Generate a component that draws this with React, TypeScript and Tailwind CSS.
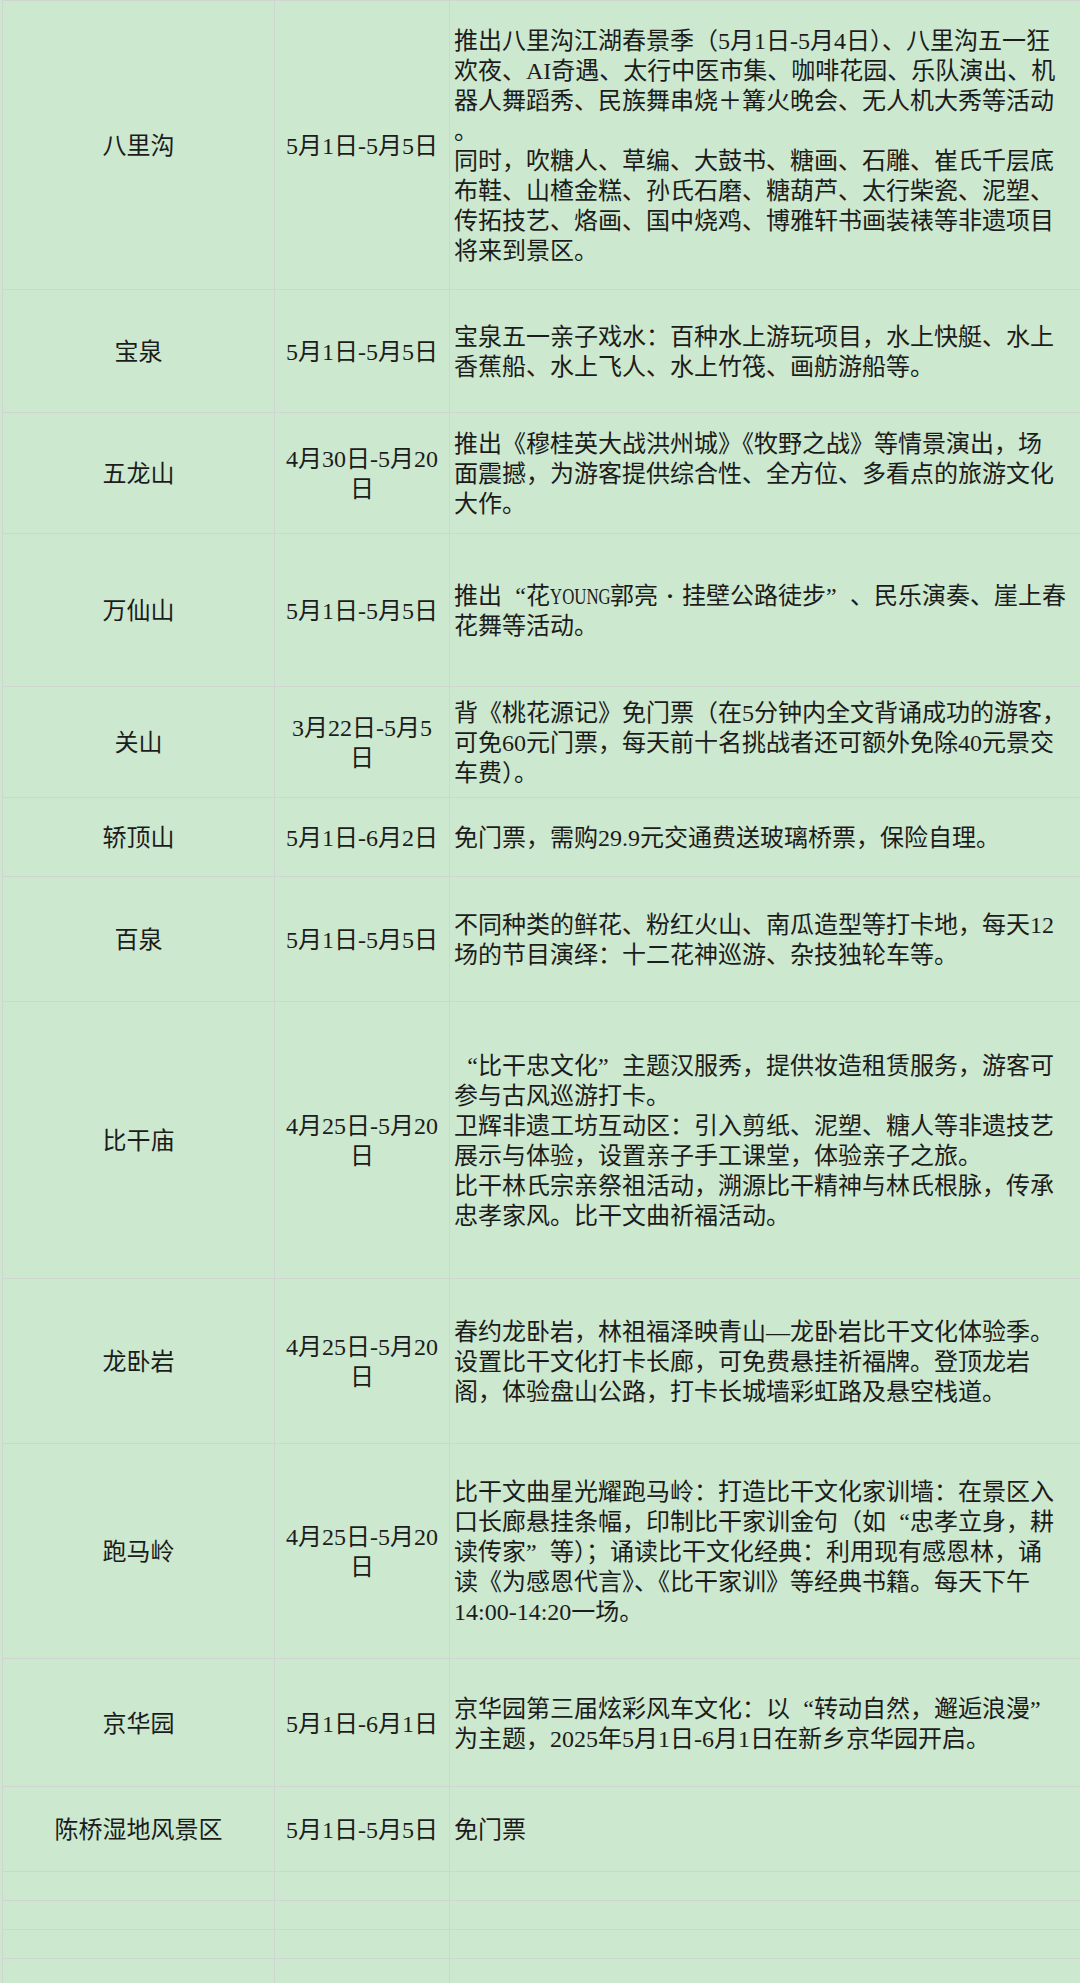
import React from 'react'

type Row = {
  place: string
  date: string[]
  lines: string[]
  h: string
}

const rows: Row[] = [
  {
    place: '八里沟',
    date: ['5月1日-5月5日'],
    h: 'h-[289px]',
    lines: [
      '推出八里沟江湖春景季（5月1日-5月4日）、八里沟五一狂',
      '欢夜、AI奇遇、太行中医市集、咖啡花园、乐队演出、机',
      '器人舞蹈秀、民族舞串烧＋篝火晚会、无人机大秀等活动',
      '。',
      '同时，吹糖人、草编、大鼓书、糖画、石雕、崔氏千层底',
      '布鞋、山楂金糕、孙氏石磨、糖葫芦、太行柴瓷、泥塑、',
      '传拓技艺、烙画、国中烧鸡、博雅轩书画装裱等非遗项目',
      '将来到景区。',
    ],
  },
  {
    place: '宝泉',
    date: ['5月1日-5月5日'],
    h: 'h-[123px]',
    lines: ['宝泉五一亲子戏水：百种水上游玩项目，水上快艇、水上', '香蕉船、水上飞人、水上竹筏、画舫游船等。'],
  },
  {
    place: '五龙山',
    date: ['4月30日-5月20', '日'],
    h: 'h-[121px]',
    lines: [
      '推出《穆桂英大战洪州城》《牧野之战》等情景演出，场',
      '面震撼，为游客提供综合性、全方位、多看点的旅游文化',
      '大作。',
    ],
  },
  {
    place: '万仙山',
    date: ['5月1日-5月5日'],
    h: 'h-[153px]',
    lines: ['推出“花YOUNG郭亮·挂壁公路徒步”、民乐演奏、崖上春', '花舞等活动。'],
  },
  {
    place: '关山',
    date: ['3月22日-5月5', '日'],
    h: 'h-[111px]',
    lines: [
      '背《桃花源记》免门票（在5分钟内全文背诵成功的游客，',
      '可免60元门票，每天前十名挑战者还可额外免除40元景交',
      '车费）。',
    ],
  },
  {
    place: '轿顶山',
    date: ['5月1日-6月2日'],
    h: 'h-[79px]',
    lines: ['免门票，需购29.9元交通费送玻璃桥票，保险自理。'],
  },
  {
    place: '百泉',
    date: ['5月1日-5月5日'],
    h: 'h-[125px]',
    lines: ['不同种类的鲜花、粉红火山、南瓜造型等打卡地，每天12', '场的节目演绎：十二花神巡游、杂技独轮车等。'],
  },
  {
    place: '比干庙',
    date: ['4月25日-5月20', '日'],
    h: 'h-[277px]',
    lines: [
      '“比干忠文化”主题汉服秀，提供妆造租赁服务，游客可',
      '参与古风巡游打卡。',
      '卫辉非遗工坊互动区：引入剪纸、泥塑、糖人等非遗技艺',
      '展示与体验，设置亲子手工课堂，体验亲子之旅。',
      '比干林氏宗亲祭祖活动，溯源比干精神与林氏根脉，传承',
      '忠孝家风。比干文曲祈福活动。',
    ],
  },
  {
    place: '龙卧岩',
    date: ['4月25日-5月20', '日'],
    h: 'h-[165px]',
    lines: [
      '春约龙卧岩，林祖福泽映青山—龙卧岩比干文化体验季。',
      '设置比干文化打卡长廊，可免费悬挂祈福牌。登顶龙岩',
      '阁，体验盘山公路，打卡长城墙彩虹路及悬空栈道。',
    ],
  },
  {
    place: '跑马岭',
    date: ['4月25日-5月20', '日'],
    h: 'h-[215px]',
    lines: [
      '比干文曲星光耀跑马岭：打造比干文化家训墙：在景区入',
      '口长廊悬挂条幅，印制比干家训金句（如“忠孝立身，耕',
      '读传家”等）；诵读比干文化经典：利用现有感恩林，诵',
      '读《为感恩代言》、《比干家训》等经典书籍。每天下午',
      '14:00-14:20一场。',
    ],
  },
  {
    place: '京华园',
    date: ['5月1日-6月1日'],
    h: 'h-[128px]',
    lines: ['京华园第三届炫彩风车文化：以“转动自然，邂逅浪漫”', '为主题，2025年5月1日-6月1日在新乡京华园开启。'],
  },
  {
    place: '陈桥湿地风景区',
    date: ['5月1日-5月5日'],
    h: 'h-[85px]',
    lines: ['免门票'],
  },
]

const emptyRows = ['h-[29px]', 'h-[29px]', 'h-[29px]', 'h-[30px]']

const line = 'border-[#cfd5d0]'
const cell = `border-r ${line} flex flex-col justify-center pt-[2px]`

// quotes and the middle dot take a full em in the sheet's font, latin capitals half an em
function Line({ text }: { text: string }) {
  const parts = text.split(/([“”·]|YOUNG)/)
  return (
    <span className="whitespace-nowrap">
      {parts.map((p, i) => {
        if (p === '“') return <span key={i} className="inline-block w-[24px] text-right">“</span>
        if (p === '”') return <span key={i} className="inline-block w-[24px] text-left">”</span>
        if (p === '·') return <span key={i} className="inline-block w-[24px] text-center font-bold">·</span>
        if (p === 'YOUNG')
          return (
            <span key={i} className="inline-block w-[60px] whitespace-nowrap">
              <span className="inline-block origin-left scale-x-[0.7]">YOUNG</span>
            </span>
          )
        return p
      })}
    </span>
  )
}

export default function App() {
  return (
    <div
      className="w-[1080px] h-[1983px] overflow-hidden bg-[#cce8cf] pl-[2px] text-[24px] leading-[30px] text-[#1c1c1c]"
      style={{ fontFamily: '"Liberation Serif", "Noto Sans CJK SC", serif' }}
    >
      <div className={`border-l border-t ${line}`}>
        {rows.map((r) => (
          <div key={r.place} className={`grid grid-cols-[272px_175px_1fr] border-b ${line} ${r.h}`}>
            <div className={`${cell} items-center`}>
              <span className="whitespace-nowrap">{r.place}</span>
            </div>
            <div className={`${cell} items-center`}>
              {r.date.map((d) => (
                <span key={d} className="whitespace-nowrap">
                  {d}
                </span>
              ))}
            </div>
            <div className="flex flex-col justify-center pl-[4px] pt-[2px]">
              {r.lines.map((l, i) => (
                <Line key={i} text={l} />
              ))}
            </div>
          </div>
        ))}
        {emptyRows.map((h, i) => (
          <div key={i} className={`grid grid-cols-[272px_175px_1fr] border-b ${line} ${h}`}>
            <div className={`border-r ${line}`} />
            <div className={`border-r ${line}`} />
            <div />
          </div>
        ))}
      </div>
    </div>
  )
}
